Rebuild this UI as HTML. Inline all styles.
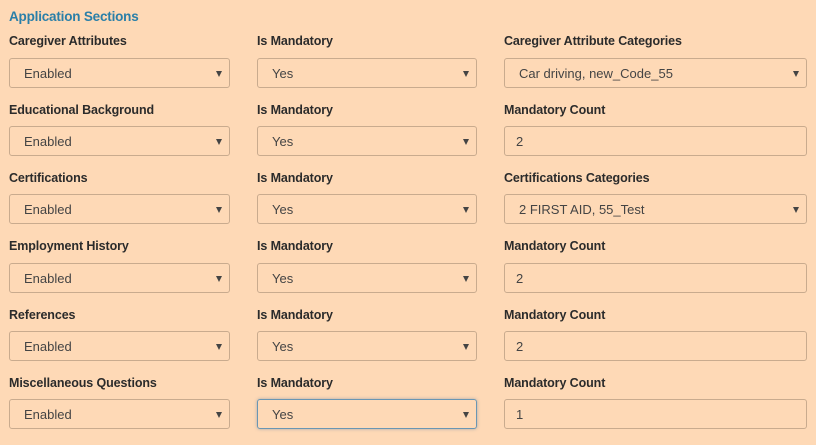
<!DOCTYPE html>
<html><head><meta charset="utf-8"><style>
*{box-sizing:border-box;margin:0;padding:0}
body{width:816px;height:445px;background:#fed9b6;font-family:"Liberation Sans",sans-serif;position:relative;overflow:hidden}
.t{position:absolute;left:9px;top:9px;font-size:13.5px;font-weight:bold;color:#2a7fa8;letter-spacing:-0.2px}
.l{position:absolute;font-size:12.5px;font-weight:bold;color:#2b2b2b;letter-spacing:-0.1px}
.b{position:absolute;height:30px;border:1px solid #c9ab8e;border-radius:3px;font-size:13px;color:#444;padding:7px 0 0 14px}
.b.s::after{content:"";position:absolute;right:7px;top:12px;border-left:3.5px solid transparent;border-right:3.5px solid transparent;border-top:6px solid #444}
.b.i{padding-left:11px}
.f{border-color:#6a96b3;box-shadow:0 0 3px rgba(80,120,160,.5)}
</style></head><body>
<div class="t">Application Sections</div>
<div class="l" style="left:9px;top:34px">Caregiver Attributes</div>
<div class="l" style="left:257px;top:34px">Is Mandatory</div>
<div class="l" style="left:504px;top:34px">Caregiver Attribute Categories</div>
<div class="b s" style="left:9px;top:58px;width:221px">Enabled</div>
<div class="b s" style="left:257px;top:58px;width:220px">Yes</div>
<div class="b s" style="left:504px;top:58px;width:303px">Car driving, new_Code_55</div>

<div class="l" style="left:9px;top:103px">Educational Background</div>
<div class="l" style="left:257px;top:103px">Is Mandatory</div>
<div class="l" style="left:504px;top:103px">Mandatory Count</div>
<div class="b s" style="left:9px;top:126px;width:221px">Enabled</div>
<div class="b s" style="left:257px;top:126px;width:220px">Yes</div>
<div class="b i" style="left:504px;top:126px;width:303px">2</div>

<div class="l" style="left:9px;top:171px">Certifications</div>
<div class="l" style="left:257px;top:171px">Is Mandatory</div>
<div class="l" style="left:504px;top:171px">Certifications Categories</div>
<div class="b s" style="left:9px;top:194px;width:221px">Enabled</div>
<div class="b s" style="left:257px;top:194px;width:220px">Yes</div>
<div class="b s" style="left:504px;top:194px;width:303px">2 FIRST AID, 55_Test</div>

<div class="l" style="left:9px;top:239px">Employment History</div>
<div class="l" style="left:257px;top:239px">Is Mandatory</div>
<div class="l" style="left:504px;top:239px">Mandatory Count</div>
<div class="b s" style="left:9px;top:263px;width:221px">Enabled</div>
<div class="b s" style="left:257px;top:263px;width:220px">Yes</div>
<div class="b i" style="left:504px;top:263px;width:303px">2</div>

<div class="l" style="left:9px;top:308px">References</div>
<div class="l" style="left:257px;top:308px">Is Mandatory</div>
<div class="l" style="left:504px;top:308px">Mandatory Count</div>
<div class="b s" style="left:9px;top:331px;width:221px">Enabled</div>
<div class="b s" style="left:257px;top:331px;width:220px">Yes</div>
<div class="b i" style="left:504px;top:331px;width:303px">2</div>

<div class="l" style="left:9px;top:376px">Miscellaneous Questions</div>
<div class="l" style="left:257px;top:376px">Is Mandatory</div>
<div class="l" style="left:504px;top:376px">Mandatory Count</div>
<div class="b s" style="left:9px;top:399px;width:221px">Enabled</div>
<div class="b s f" style="left:257px;top:399px;width:220px">Yes</div>
<div class="b i" style="left:504px;top:399px;width:303px">1</div>
</body></html>
